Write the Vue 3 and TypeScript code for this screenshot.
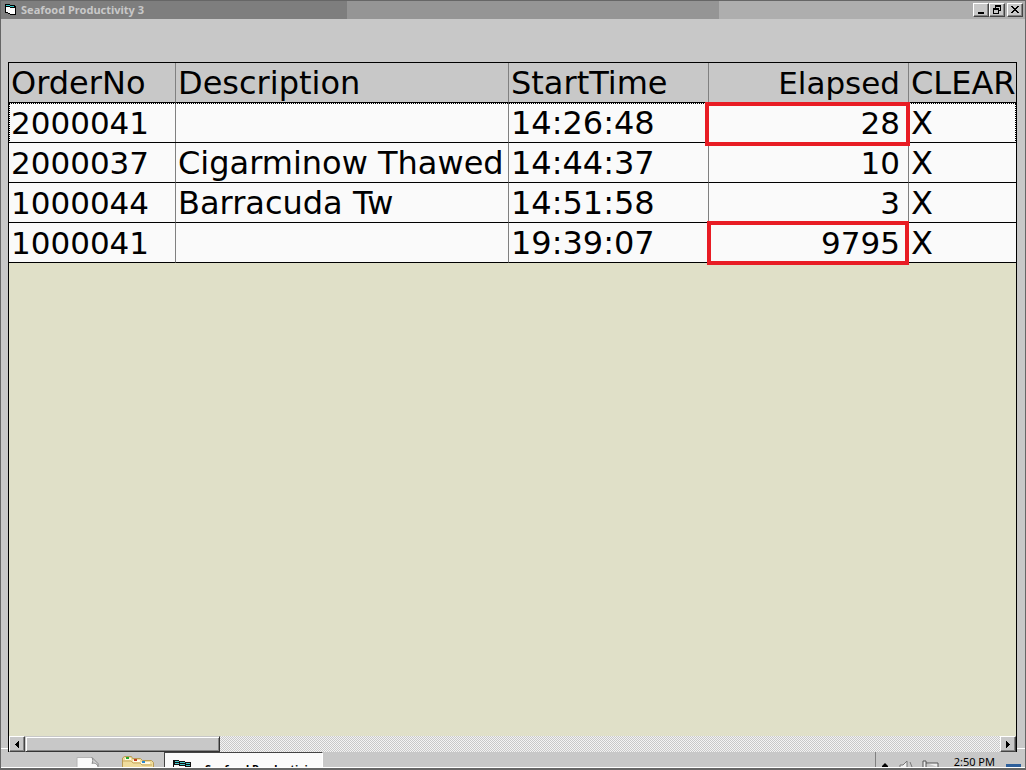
<script setup lang="ts">
interface Order {
  no: string
  description: string
  start: string
  elapsed: number
  alert?: 'wide' | 'narrow'
}

const orders: Order[] = [
  { no: '2000041', description: '', start: '14:26:48', elapsed: 28, alert: 'wide' },
  { no: '2000037', description: 'Cigarminow Thawed', start: '14:44:37', elapsed: 10 },
  { no: '1000044', description: 'Barracuda Tw', start: '14:51:58', elapsed: 3 },
  { no: '1000041', description: '', start: '19:39:07', elapsed: 9795, alert: 'narrow' },
]
</script>

<template>
  <div class="window">
    <header class="titlebar">
      <svg class="app-icon" width="12" height="12" viewBox="0 0 12 12" shape-rendering="crispEdges" aria-hidden="true">
        <path d="M0 0h5v1h5v1h1v9H5v-1H3V9H0z" fill="#000" />
        <path d="M1 1h4v1h4v1H5V2H1z" fill="#3cc" />
        <path d="M1 3h4v1h5v6H5V9H3V8H1z" fill="#fff" />
      </svg>
      <h1>Seafood Productivity 3</h1>
      <div class="controls">
        <button type="button" aria-label="Minimize">
          <svg width="12" height="11" viewBox="0 0 12 11" shape-rendering="crispEdges"><path d="M3 8h6v2H3z" /></svg>
        </button>
        <button type="button" aria-label="Restore">
          <svg width="12" height="11" viewBox="0 0 12 11" shape-rendering="crispEdges">
            <path d="M4 1h6v6H8V6h1V3H5v1H4zM2 4h6v6H2zM3 6v3h4V6z" fill-rule="evenodd" />
          </svg>
        </button>
        <button type="button" class="close" aria-label="Close">
          <svg width="12" height="11" viewBox="0 0 12 11" shape-rendering="crispEdges">
            <path d="M2 2h2v1h1v1h2V3h1V2h2v1H9v1H8v1H7v1h1v1h1v1h1v1H8V8H7V7H5v1H4v1H2V8h1V7h1V6h1V5H4V4H3V3H2z" />
          </svg>
        </button>
      </div>
    </header>

    <main>
      <div class="grid">
        <table>
          <colgroup>
            <col class="c-no" /><col class="c-desc" /><col class="c-start" /><col class="c-elapsed" /><col />
          </colgroup>
          <thead>
            <tr>
              <th scope="col">OrderNo</th>
              <th scope="col">Description</th>
              <th scope="col">StartTime</th>
              <th scope="col" class="num">Elapsed</th>
              <th scope="col">CLEAR</th>
            </tr>
          </thead>
          <tbody>
            <tr v-for="(o, i) in orders" :key="o.no" :class="{ focused: i === 0 }">
              <td class="code">{{ o.no }}</td>
              <td>{{ o.description }}</td>
              <td>{{ o.start }}</td>
              <td class="num" :class="o.alert">{{ o.elapsed }}</td>
              <td>X</td>
            </tr>
          </tbody>
        </table>
        <div class="scrollbar">
          <button type="button" aria-label="Scroll left">
            <svg width="4" height="7" viewBox="0 0 4 7" shape-rendering="crispEdges"><path d="M3 0h1v7H3V6H2V5H1V4H0V3h1V2h1V1h1z" /></svg>
          </button>
          <div class="track"><div class="thumb"></div></div>
          <button type="button" aria-label="Scroll right">
            <svg width="4" height="7" viewBox="0 0 4 7" shape-rendering="crispEdges"><path d="M0 0h1v1h1v1h1v1h1v1H3v1H2v1H1v1H0z" /></svg>
          </button>
        </div>
      </div>
    </main>

    <footer class="taskbar">
      <svg class="doc" width="24" height="15" viewBox="0 0 24 15" aria-hidden="true">
        <path d="M1 16V5.500h15l6 7V16z" fill="#fafafa" stroke="#b4b4b4" />
        <path d="M16 5.500c1 2 1 4 0 6 2-1 5 0 6 3v-3z" fill="#d4d4d4" stroke="#8a8a8a" />
      </svg>
      <svg class="folder" width="34" height="15" viewBox="0 0 34 15" aria-hidden="true">
        <path d="M1.500 16V6l2-1.500h7l1 2h8l2 2h9l2 2V16z" fill="#efdc9c" stroke="#b99b55" />
        <path d="M4 6h6v2H4zM12 8h7v2h-7zM20 10h9v2h-9z" fill="#fffbe6" />
        <path d="M2 9h8l2 2h7l2 2h10" fill="none" stroke="#c9ab62" />
        <path d="M5 5h3v2H5z" fill="#22a62c" />
        <path d="M13 7h3v2h-3z" fill="#c43a22" />
        <path d="M21 9h3v2h-3z" fill="#2889cf" />
      </svg>
      <button type="button" class="task">
        <svg width="20" height="10" viewBox="0 0 20 10" shape-rendering="crispEdges" aria-hidden="true">
          <path d="M0 0h6v1h6v1h6v5h-6V6H6V5H1v5H0z" fill="#111" />
          <path d="M2 1h4v1H2zM7 2h5v1H7zM13 3h4v1h-4zM2 3h4v1H2zM7 4h5v1H7zM13 5h4v1h-4z" fill="#4cc" />
        </svg>
        <span>Seafood Productivi...</span>
      </button>
      <div class="tray">
        <svg class="tray-icons" width="66" height="15" viewBox="0 0 66 15" aria-hidden="true">
          <path d="M6 14l3-3 3 3v1H6z" fill="#000" />
          <path d="M24 15v-2h3l4-4v6M34 10l2 5" fill="#eee" stroke="#777" />
          <path d="M47 15V9h3v6M50 11h12v4" fill="#eee" stroke="#555" />
        </svg>
        <time>2:50 PM</time>
        <span class="desktop"></span>
      </div>
    </footer>
  </div>
</template>

<style>
body { margin: 0; }
</style>

<style scoped>
* { box-sizing: border-box; }
.window {
  height: 100vh;
  display: flex;
  flex-direction: column;
  overflow: hidden;
  background: #c8c8c8;
  border: 1px solid #666;
  border-bottom-width: 2px;
  font-family: "DejaVu Sans", Verdana, sans-serif;
  color: #000;
}
.titlebar {
  flex: none;
  height: 18px;
  display: flex;
  align-items: center;
  padding: 0 2px 0 4px;
  background: linear-gradient(90deg, #7e7e7e 0 346px, #959595 346px 718px, #aeaeae 718px);
}
.app-icon { flex: none; }
h1 {
  flex: 1;
  margin: 0 0 0 4px;
  font: bold 11px/16px "Noto Sans", Tahoma, sans-serif;
  color: #c8c8c8;
}
button {
  padding: 0;
  border: 1px solid;
  border-color: #fff #444 #444 #fff;
  border-radius: 0;
  background: #c8c8c8;
  box-shadow: inset -1px -1px #858585;
  color: #000;
}
.controls { display: flex; }
.controls button {
  width: 16px;
  height: 14px;
  display: flex;
  justify-content: center;
}
.controls .close { margin-left: 2px; }
main {
  flex: 1;
  min-height: 0;
  display: flex;
  padding: 43px 8px 0 7px;
  background: linear-gradient(#fff, #fff) 0 calc(100% - 3px) / 100% 1px no-repeat;
}
.grid {
  flex: 1;
  min-width: 0;
  display: flex;
  flex-direction: column;
  justify-content: space-between;
  border: 1px solid #000;
  border-bottom: 0;
  background: #e0e0c8;
}
table {
  width: 100%;
  table-layout: fixed;
  border-collapse: separate;
  border-spacing: 0;
  background: #fafafa;
  font-size: 32px;
  line-height: 37px;
}
.c-no { width: 167px; }
.c-desc { width: 333px; }
.c-start, .c-elapsed { width: 200px; }
th, td {
  height: 40px;
  padding: 2px 0 0 2px;
  text-align: left;
  font-weight: normal;
  white-space: nowrap;
  border-right: 1px solid #808080;
  border-bottom: 1px solid #000;
}
th { background: #c8c8c8; }
th:last-child, td:last-child { border-right: 0; }
.code, .num { font-size: 31px; }
.num { text-align: right; padding-right: 8px; }
.focused { outline: 1px dotted #000; outline-offset: -1px; }
.wide, .narrow { position: relative; }
.wide::after, .narrow::after {
  content: "";
  position: absolute;
  z-index: 1;
  border: 4px solid #e81c24;
}
.wide::after { inset: -1px -2px -4px -4px; }
.narrow::after { inset: -2px -1px -3px -2px; }
.scrollbar { display: flex; height: 16px; }
.scrollbar button {
  width: 16px;
  display: flex;
  align-items: center;
  justify-content: center;
}
.track {
  flex: 1;
  background: repeating-conic-gradient(#c8c8c8 0 25%, #f4f4f4 0 50%) 0 0 / 2px 2px;
}
.thumb {
  width: 195px;
  height: 16px;
  background: #c8c8c8;
  border: 1px solid;
  border-color: #c8c8c8 #333 #333 #c8c8c8;
  box-shadow: inset 1px 1px #fff, inset -1px -1px #858585;
}
.taskbar {
  flex: none;
  height: 16px;
  display: flex;
  overflow: hidden;
  border-bottom: 1px solid #fff;
}
.doc { flex: none; margin-left: 75px; }
.folder { flex: none; margin-left: 21px; }
.task {
  width: 159px;
  height: 24px;
  margin-left: 9px;
  padding: 7px 0 0 8px;
  display: flex;
  gap: 12px;
  overflow: hidden;
  background: #fafafa;
  border-color: #444 #fff #fff #444;
  box-shadow: none;
  font: bold 11px/18px "Noto Sans", Tahoma, sans-serif;
}
.task svg { flex: none; }
.tray {
  margin-left: auto;
  display: flex;
  border-left: 1px solid #808080;
}
time {
  margin: 2px 11px 0 12px;
  font: 11px/16px "Noto Sans", Tahoma, sans-serif;
}
.desktop {
  width: 15px;
  height: 8px;
  margin: 12px 4px 0 0;
  background: #2d5f9b;
}
</style>
